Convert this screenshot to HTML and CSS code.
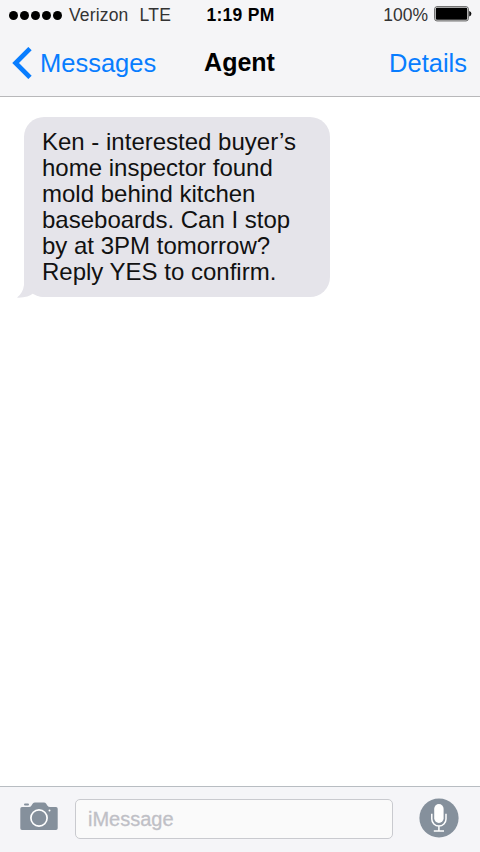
FILE: index.html
```html
<!DOCTYPE html>
<html lang="en">
<head>
<meta charset="utf-8">
<title>Agent</title>
<link rel="stylesheet" href="styles.css">
</head>
<body>
<div class="phone">
  <header class="top">
    <div class="status">
      <div class="status-left">
        <span class="signal"><i></i><i></i><i></i><i></i><i></i></span>
        <span class="carrier">Verizon</span>
        <span class="network">LTE</span>
      </div>
      <span class="time">1:19 PM</span>
      <div class="status-right">
        <span class="percent">100%</span>
        <svg class="battery" width="38" height="16" viewBox="0 0 38 16"><rect x=".7" y=".7" width="33.6" height="14.2" rx="2.2" fill="#fff" stroke="#555" stroke-width="1"/><rect x="1.8" y="1.8" width="31.4" height="12" rx="1.2" fill="#000"/><path d="M35.2 5q2.2.8 2.2 2.8t-2.2 2.8z" fill="#111"/></svg>
      </div>
    </div>
    <nav class="nav">
      <a class="back"><svg width="20" height="32" viewBox="0 0 20 32"><path d="M18 1.600 3.600 16 18 30.400" fill="none" stroke="#087dff" stroke-width="4.700"/></svg><span>Messages</span></a>
      <h1>Agent</h1>
      <a class="details">Details</a>
    </nav>
  </header>
  <main class="thread">
    <div class="bubble">
      Ken - interested buyer’s<br>home inspector found<br>mold behind kitchen<br>baseboards. Can I stop<br>by at 3PM tomorrow?<br>Reply YES to confirm.
      <svg class="tail" width="30" height="22" viewBox="0 0 30 22"><path d="M7 0v9Q6 17 0 21.600Q11 22 17 16.700Q22 21 29 21L22 14Q14 10 14 0z" fill="#e5e4ea"/></svg>
    </div>
  </main>
  <footer class="compose">
    <svg class="camera" width="38" height="29" viewBox="0 0 38 29"><rect x="4" y="1.400" width="5" height="2" rx="1" fill="#85909c"/><path d="M2 5h7q1.500 0 2.500-1.500L13 1.300Q13.700.400 15 .400h9q1.300 0 2 1L27.500 3.700Q28.300 5 30 5h6q1.700 0 1.700 1.700v19.600q0 1.700-1.700 1.700H2Q.300 28 .300 26.300V6.700Q.300 5 2 5z" fill="#85909c"/><circle cx="19" cy="16" r="8.100" fill="none" stroke="#fff" stroke-width="1.700"/><circle cx="29.500" cy="8.500" r="1" fill="#fff"/></svg>
    <div class="field">iMessage</div>
    <svg class="mic" width="40" height="40" viewBox="0 0 40 40"><circle cx="20" cy="20" r="19.600" fill="#85909c"/><rect x="15.200" y="6" width="9.400" height="19" rx="4.700" fill="#fff"/><path d="M12.800 15.800v5.200a7.100 7.100 0 0 0 14.200 0v-5.200M19.900 28v4.500M14.800 32.900h10.200" fill="none" stroke="#fff" stroke-width="1.500"/></svg>
  </footer>
</div>
</body>
</html>
```
FILE: styles.css
```css
* { box-sizing: border-box; }
body {
  margin: 0;
  font-family: "Liberation Sans", Arial, sans-serif;
  color: #000;
  background: #fff;
}
.phone {
  width: 480px;
  height: 852px;
  display: flex;
  flex-direction: column;
}
.top {
  height: 97px;
  background: #f5f5f7;
  border-bottom: 1px solid #b8b8ba;
}
.status, .nav {
  display: grid;
  grid-template-columns: 1fr auto 1fr;
  align-items: center;
}
.status {
  height: 30px;
  padding: 0 8px 0 9px;
  font-size: 17.5px;
  line-height: 30px;
  color: #333;
}
.status-left, .status-right, .signal, .back { display: flex; align-items: center; }
.status-right { justify-content: flex-end; }
.signal { gap: 2px; margin: 1px 7px 0 0; }
.signal i { width: 9px; height: 9px; border-radius: 50%; background: #000; }
.carrier { letter-spacing: .15px; }
.network { margin-left: 11px; letter-spacing: .3px; }
.time { font-weight: bold; color: #000; letter-spacing: .3px; }
.percent { margin-right: 6px; }
.battery { margin-top: -3px; }
.nav {
  height: 66px;
  padding: 0 13px 0 12px;
  font-size: 25.5px;
}
.back, .details { color: #087dff; }
.back span { margin-left: 8px; }
.details { justify-self: end; }
h1 { margin: -2px 0 0; font-size: 25px; }
.thread { flex: 1; padding: 20px 24px; }
.bubble {
  position: relative;
  width: 306px;
  height: 180px;
  padding: 12px 18px;
  border-radius: 20px;
  background: #e5e4ea;
  font-size: 24px;
  line-height: 26px;
  white-space: nowrap;
  color: #111;
}
.tail { position: absolute; left: -7px; bottom: -1px; }
.compose {
  height: 66px;
  display: flex;
  align-items: center;
  padding: 0 21px 2px 20px;
  border-top: 1px solid #b8bdc2;
  background: #f5f5f8;
}
.field {
  width: 318px;
  height: 40px;
  margin: 0 26px 0 17px;
  padding-left: 12px;
  border: 1px solid #c9cacf;
  border-radius: 5px;
  background: #fafafa;
  font-size: 20px;
  line-height: 38px;
  color: #bfc0c6;
  -webkit-text-stroke: .3px #bfc0c6;
}
.camera { margin-top: -4px; }
.camera, .mic { flex: none; }
.mic { margin-top: -2px; }
```
